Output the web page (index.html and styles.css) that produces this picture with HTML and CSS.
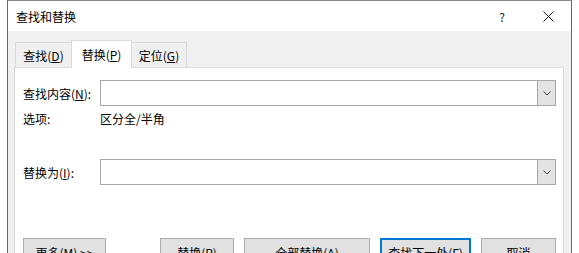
FILE: index.html
```html
<!DOCTYPE html>
<html lang="zh-CN">
<head>
    <meta charset="UTF-8">
    <meta name="viewport" content="width=device-width, initial-scale=1.0">
    <title>查找和替换</title>
    <link rel="stylesheet" href="styles.css">
</head>
<body>
    <div class="window">
        <div class="titlebar">
            <span class="title">查找和替换</span>
            <span class="help">?</span>
            <span class="close">
                <svg width="11" height="11" viewBox="0 0 11 11">
                    <path d="M0.5 0.5 L10.5 10.5 M10.5 0.5 L0.5 10.5" stroke="#1a1a1a" stroke-width="1" fill="none"/>
                </svg>
            </span>
        </div>
        <div class="content">
            <div class="tabs">
                <div class="tab tab-find">查找(<u>D</u>)</div>
                <div class="tab tab-replace active">替换(<u>P</u>)</div>
                <div class="tab tab-goto">定位(<u>G</u>)</div>
            </div>
            <div class="panel">
                <div class="row">
                    <label class="label" for="findText">查找内容(<u>N</u>):</label>
                    <div class="combo">
                        <input type="text" id="findText">
                        <span class="arrow">
                            <svg width="8" height="5" viewBox="0 0 8 5">
                                <path d="M0.5 0.5 L4 4 L7.5 0.5" stroke="#444" stroke-width="1" fill="none"/>
                            </svg>
                        </span>
                    </div>
                </div>
                <div class="row options">
                    <span class="label">选项:</span>
                    <span>区分全/半角</span>
                </div>
                <div class="row replace">
                    <label class="label" for="replaceText">替换为(<u>I</u>):</label>
                    <div class="combo">
                        <input type="text" id="replaceText">
                        <span class="arrow">
                            <svg width="8" height="5" viewBox="0 0 8 5">
                                <path d="M0.5 0.5 L4 4 L7.5 0.5" stroke="#444" stroke-width="1" fill="none"/>
                            </svg>
                        </span>
                    </div>
                </div>
                <div class="buttons">
                    <button class="btn btn-more">更多(<u>M</u>) &gt;&gt;</button>
                    <button class="btn btn-replace">替换(<u>R</u>)</button>
                    <button class="btn btn-all">全部替换(<u>A</u>)</button>
                    <button class="btn btn-next primary">查找下一处(<u>F</u>)</button>
                    <button class="btn btn-cancel">取消</button>
                </div>
            </div>
        </div>
    </div>
</body>
</html>
```

FILE: styles.css
```css
html, body {
    margin: 0;
    height: 253px;
    overflow: hidden;
}
body {
    font-family: "Noto Sans CJK SC", "Noto Sans", sans-serif;
    font-size: 12px;
    color: #000;
    background-color: #fff;
}
.window {
    margin-left: 7px;
    width: 563px;
    height: 252px;
    border-top: 1px solid #8a8a8a;
    border-left: 1px solid #686868;
    border-right: 1px solid #686868;
    overflow: hidden;
}
.titlebar {
    height: 30px;
    display: flex;
    align-items: center;
    padding-left: 8px;
    background-color: #fff;
}
.title {
    flex: 1;
}
.help {
    width: 46px;
    text-align: center;
    color: #222;
}
.close {
    width: 46px;
    display: flex;
    justify-content: center;
    align-items: center;
}
.content {
    background-color: #f0f0f0;
    padding: 9px 7px 0 6px;
    height: 300px;
}
.tabs {
    display: flex;
    align-items: flex-end;
    height: 27px;
    padding-left: 1px;
}
.tab {
    box-sizing: border-box;
    height: 25px;
    border: 1px solid #d9d9d9;
    border-bottom: none;
    background-color: #f0f0f0;
    display: flex;
    align-items: center;
    justify-content: center;
}
.tab-find {
    width: 57px;
    margin-right: -1px;
}
.tab-replace {
    width: 61px;
}
.tab-goto {
    width: 56px;
    margin-left: -1px;
}
.tab.active {
    position: relative;
    z-index: 1;
    height: 28px;
    margin-bottom: -1px;
    background-color: #fff;
}
.panel {
    background-color: #fff;
    border: 1px solid #d9d9d9;
    padding: 12px 7px 0 8px;
    height: 300px;
}
.row {
    display: flex;
    align-items: center;
}
.label {
    width: 77px;
    flex: none;
}
.combo {
    flex: 1;
    box-sizing: border-box;
    height: 26px;
    border: 1px solid #a7a7a7;
    display: flex;
    background-color: #fff;
}
.combo input {
    flex: 1;
    min-width: 0;
    border: none;
    outline: none;
    padding: 0 3px;
    font: inherit;
}
.arrow {
    width: 17px;
    border-left: 1px solid #a7a7a7;
    background-color: #e3e3e3;
    display: flex;
    align-items: center;
    justify-content: center;
}
.options {
    margin-top: 5px;
    line-height: 16px;
}
.replace {
    margin-top: 32px;
}
.buttons {
    display: flex;
    margin-top: 53px;
}
.btn {
    box-sizing: border-box;
    height: 29px;
    padding: 0;
    border: 1px solid #adadad;
    background-color: #e1e1e1;
    font: inherit;
    color: #000;
}
.btn.primary {
    border: 2px solid #0078d7;
}
.btn-more {
    width: 83px;
}
.btn-replace {
    width: 74px;
    margin-left: 54px;
}
.btn-all {
    width: 126px;
    margin-left: 10px;
}
.btn-next {
    width: 91px;
    margin-left: 10px;
}
.btn-cancel {
    width: 75px;
    margin-left: 10px;
}
```
